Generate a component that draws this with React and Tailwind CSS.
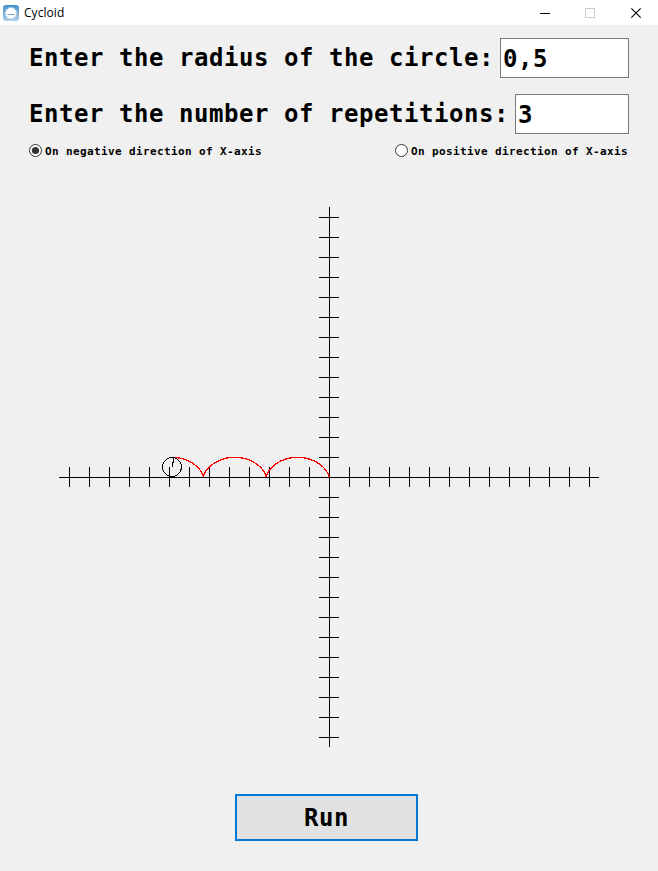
import React from "react";

const TICKS = Array.from({ length: 27 }, (_, i) => 10 + i * 20);

const RADIUS = 10;
const END_ANGLE = 15.6;
const CURVE = Array.from({ length: 241 }, (_, i) => {
  const t = (END_ANGLE * i) / 240;
  const x = 270 - RADIUS * (t - Math.sin(t));
  const y = 270.3 - RADIUS * (1 - Math.cos(t));
  return `${x.toFixed(2)},${y.toFixed(2)}`;
}).join(" ");

function TitleBar() {
  return (
    <header className="flex h-[25px] items-center bg-white pl-[3px]">
      <svg className="h-4 w-4 shrink-0" viewBox="0 0 16 16">
        <defs>
          <linearGradient id="app" x1="0" y1="0" x2="0" y2="1">
            <stop offset="0" stopColor="#4390ca" />
            <stop offset="1" stopColor="#b4cfe6" />
          </linearGradient>
        </defs>
        <rect width="16" height="16" rx="3" fill="url(#app)" />
        <circle cx="8" cy="8" r="5.3" fill="#fff" />
        <circle cx="8" cy="8" r="5.5" fill="none" stroke="#fff" strokeWidth="1" strokeDasharray="1.4 1.4" />
        <path d="M4.5 9.5h7" stroke="#78abd3" strokeWidth="1" />
      </svg>
      <span className="ml-[5px] font-['Open_Sans',sans-serif] text-[12px] leading-4 tracking-[0.05px] text-black">Cycloid</span>
      <svg className="ml-auto mr-[16px] h-[12px] w-[102px]" viewBox="0 0 102 12" shapeRendering="crispEdges" fill="none">
        <path d="M0 6.5h10" stroke="#000" />
        <rect x="45.5" y="1.5" width="9" height="9" stroke="#ccc" />
        <path d="M91.3 1.3l9.4 9.4M100.7 1.3l-9.4 9.4" stroke="#000" strokeWidth="1.1" shapeRendering="auto" />
      </svg>
    </header>
  );
}

function Field({ label, value }) {
  return (
    <label className="flex h-10 text-[24px] leading-[40px] tracking-[0.551px]">
      <span className="mr-[6px] whitespace-pre">{label}</span>
      <input
        defaultValue={value}
        className="min-w-0 flex-1 border border-[#7a7a7a] bg-white pl-[2px] pt-[2px] outline-none"
      />
    </label>
  );
}

function Radio({ label, checked }) {
  return (
    <div className="flex items-start text-[11px] leading-[15px] tracking-[0.378px]">
      <svg className="h-[13px] w-[13px]" viewBox="0 0 13 13">
        <circle cx="6.5" cy="6.5" r="6" fill="#fff" stroke="#333" />
        {checked && <circle cx="6.5" cy="6.5" r="3.6" fill="#333" />}
      </svg>
      <span className="ml-[3px] whitespace-pre">{label}</span>
    </div>
  );
}

function Plot() {
  return (
    <svg className="ml-[59px] mt-[50px] h-[540px] w-[540px] shrink-0" viewBox="0 0 540 540" fill="none" shapeRendering="crispEdges">
      <g stroke="#000">
        <path d="M0 270.5H540M270.5 0V540" />
        {TICKS.map((p) => (
          <path key={p} d={`M${p + 0.5} 260v20M260 ${p + 0.5}h20`} />
        ))}
      </g>
      <polyline points={CURVE} stroke="#f00" strokeWidth="1.3" />
      <circle cx="113" cy="260" r="9.5" stroke="#000" />
      <path d="M113.5 260v-5h1v-5" stroke="#000" />
    </svg>
  );
}

export default function App() {
  return (
    <div className="flex h-[871px] w-[658px] flex-col overflow-hidden bg-[#f0f0f0] font-['DejaVu_Sans_Mono',monospace] font-bold text-black">
      <div className="font-normal">
        <TitleBar />
      </div>
      <div className="ml-[29px] mt-[13px] flex w-[600px] flex-col gap-4">
        <Field label="Enter the radius of the circle:" value="0,5" />
        <Field label="Enter the number of repetitions:" value="3" />
      </div>
      <div className="ml-[29px] mt-[10px] flex h-[13px] w-[599px] justify-between">
        <Radio label="On negative direction of X-axis" checked />
        <Radio label="On positive direction of X-axis" />
      </div>
      <Plot />
      <button className="ml-[235px] mt-[47px] h-[47px] w-[183px] border-2 border-[#0078d7] bg-[#e1e1e1] pt-[2px] text-[24px] leading-[41px] tracking-[0.551px]">
        Run
      </button>
    </div>
  );
}
